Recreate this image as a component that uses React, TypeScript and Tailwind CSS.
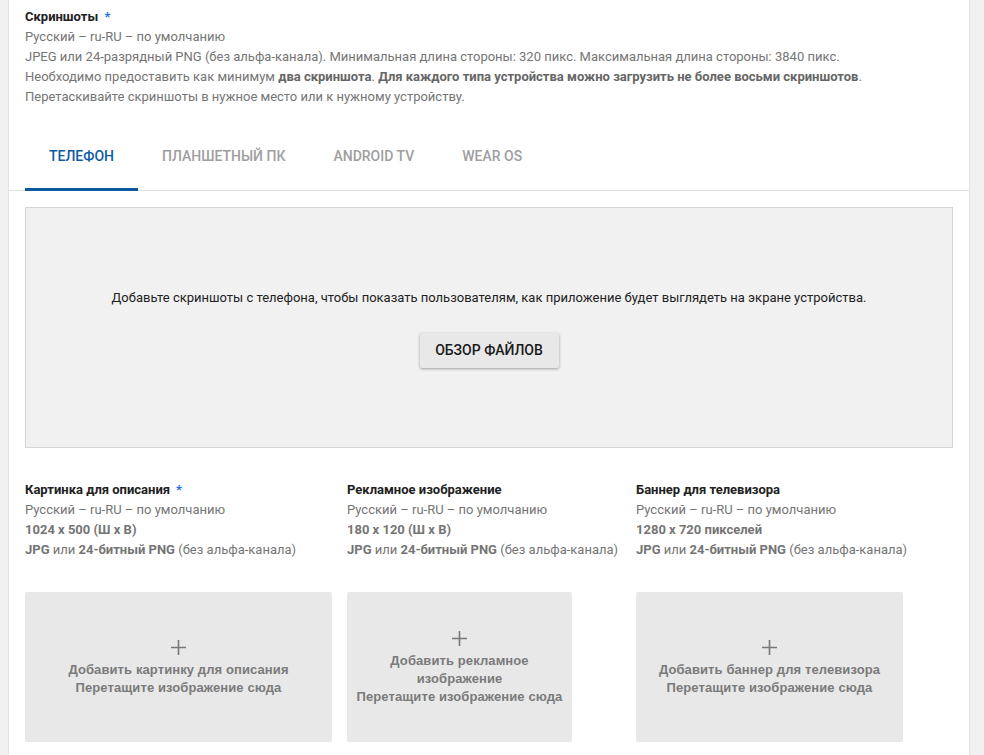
import React from 'react'

const tabs = ['Телефон', 'Планшетный ПК', 'Android TV', 'Wear OS']

interface IAssetColumn {
  title: string
  required?: boolean
  size: string
  label: string[]
  colClass: string
  boxClass: string
}

const assets: IAssetColumn[] = [
  {
    title: 'Картинка для описания',
    required: true,
    size: '1024 x 500 (Ш x В)',
    label: ['Добавить картинку для описания', 'Перетащите изображение сюда'],
    colClass: 'w-[307px]',
    boxClass: 'w-[307px]',
  },
  {
    title: 'Рекламное изображение',
    size: '180 x 120 (Ш x В)',
    label: ['Добавить рекламное изображение', 'Перетащите изображение сюда'],
    colClass: 'w-[274px]',
    boxClass: 'w-[225px]',
  },
  {
    title: 'Баннер для телевизора',
    size: '1280 x 720 пикселей',
    label: ['Добавить баннер для телевизора', 'Перетащите изображение сюда'],
    colClass: 'w-[267px]',
    boxClass: 'w-[267px]',
  },
]

const Plus = () => (
  <svg width={15} height={15} viewBox="0 0 15 15" fill="none">
    <path d="M7.5 0v15M0 7.5h15" stroke="#777" strokeWidth={1.6} />
  </svg>
)

const AssetColumn: React.FC<IAssetColumn> = ({ title, required, size, label, colClass, boxClass }) => (
  <div className={`${colClass} flex flex-col shrink-0`}>
    <span className="text-[13px] leading-5 font-bold text-[#212121]">
      {title}
      {required && <span className="ml-[6px] text-[#1a73e8]">*</span>}
    </span>
    <span className="text-[13px] leading-5 text-[#757575]">Русский – ru-RU – по умолчанию</span>
    <span className="text-[13px] leading-5 font-bold text-[#757575]">{size}</span>
    <span className="text-[13px] leading-5 text-[#757575] whitespace-nowrap">
      <b>JPG</b> или <b>24-битный PNG</b> (без альфа-канала)
    </span>

    <div
      className={`${boxClass} mt-[32px] h-[150px] px-2 rounded-[2px] bg-[#e8e8e8] flex flex-col items-center justify-center text-center`}
    >
      <div className="mt-[3px] mb-[6px]">
        <Plus />
      </div>
      <div className="font-['Liberation_Sans',Arial,sans-serif] font-bold text-[13px] leading-[18px] tracking-[0.1px] text-[#7a7a7a]">
        {label.map((line) => (
          <div key={line}>{line}</div>
        ))}
      </div>
    </div>
  </div>
)

export default function App() {
  return (
    <div className="min-h-[755px] h-[755px] overflow-hidden bg-[#f1f1f1] font-['Roboto','Noto_Sans',sans-serif]">
      <div className="ml-[8px] w-[962px] min-h-full bg-white border-x border-[#e4e4e4] px-4 pt-[7px]">
        <div className="flex flex-col">
          <span className="text-[13px] leading-5 font-bold text-[#212121]">
            Скриншоты <span className="ml-[3px] text-[#1a73e8]">*</span>
          </span>
          <span className="text-[13px] leading-5 text-[#757575]">Русский – ru-RU – по умолчанию</span>
          <span className="text-[13px] leading-5 text-[#757575]">
            JPEG или 24-разрядный PNG (без альфа-канала). Минимальная длина стороны: 320 пикс. Максимальная
            длина стороны: 3840 пикс.
          </span>
          <span className="text-[13px] leading-5 text-[#757575]">
            Необходимо предоставить как минимум <b className="text-[#666]">два скриншота</b>.{' '}
            <b className="text-[#666]">Для каждого типа устройства можно загрузить не более восьми скриншотов</b>.
          </span>
          <span className="text-[13px] leading-5 text-[#757575]">
            Перетаскивайте скриншоты в нужное место или к нужному устройству.
          </span>
        </div>

        <div className="-mx-4 mt-[14px] px-4 flex border-b border-[#e0e0e0]">
          {tabs.map((tab, i) => (
            <div
              key={tab}
              className={`h-[70px] px-6 pt-[3px] flex items-center uppercase text-[14px] font-medium border-b-[3px] -mb-px ${
                i === 0 ? 'text-[#0f5ba4] border-[#0b57a0]' : 'text-[#9e9e9e] border-transparent'
              }`}
            >
              {tab}
            </div>
          ))}
        </div>

        <div className="mt-4 h-[241px] bg-[#f1f1f1] border border-[#d4d4d4] flex flex-col items-center pt-[80px]">
          <span className="text-[13px] leading-5 text-[#212121]">
            Добавьте скриншоты с телефона, чтобы показать пользователям, как приложение будет выглядеть на экране
            устройства.
          </span>
          <button className="mt-[25px] h-[35px] w-[139px] rounded-[2px] bg-[#e8e8e8] text-[14px] font-medium uppercase text-[#1a1a1a] shadow-[0_1px_3px_rgba(0,0,0,0.35)]">
            Обзор файлов
          </button>
        </div>

        <div className="mt-[32px] flex gap-[15px]">
          {assets.map((a) => (
            <AssetColumn key={a.title} {...a} />
          ))}
        </div>
      </div>
    </div>
  )
}
